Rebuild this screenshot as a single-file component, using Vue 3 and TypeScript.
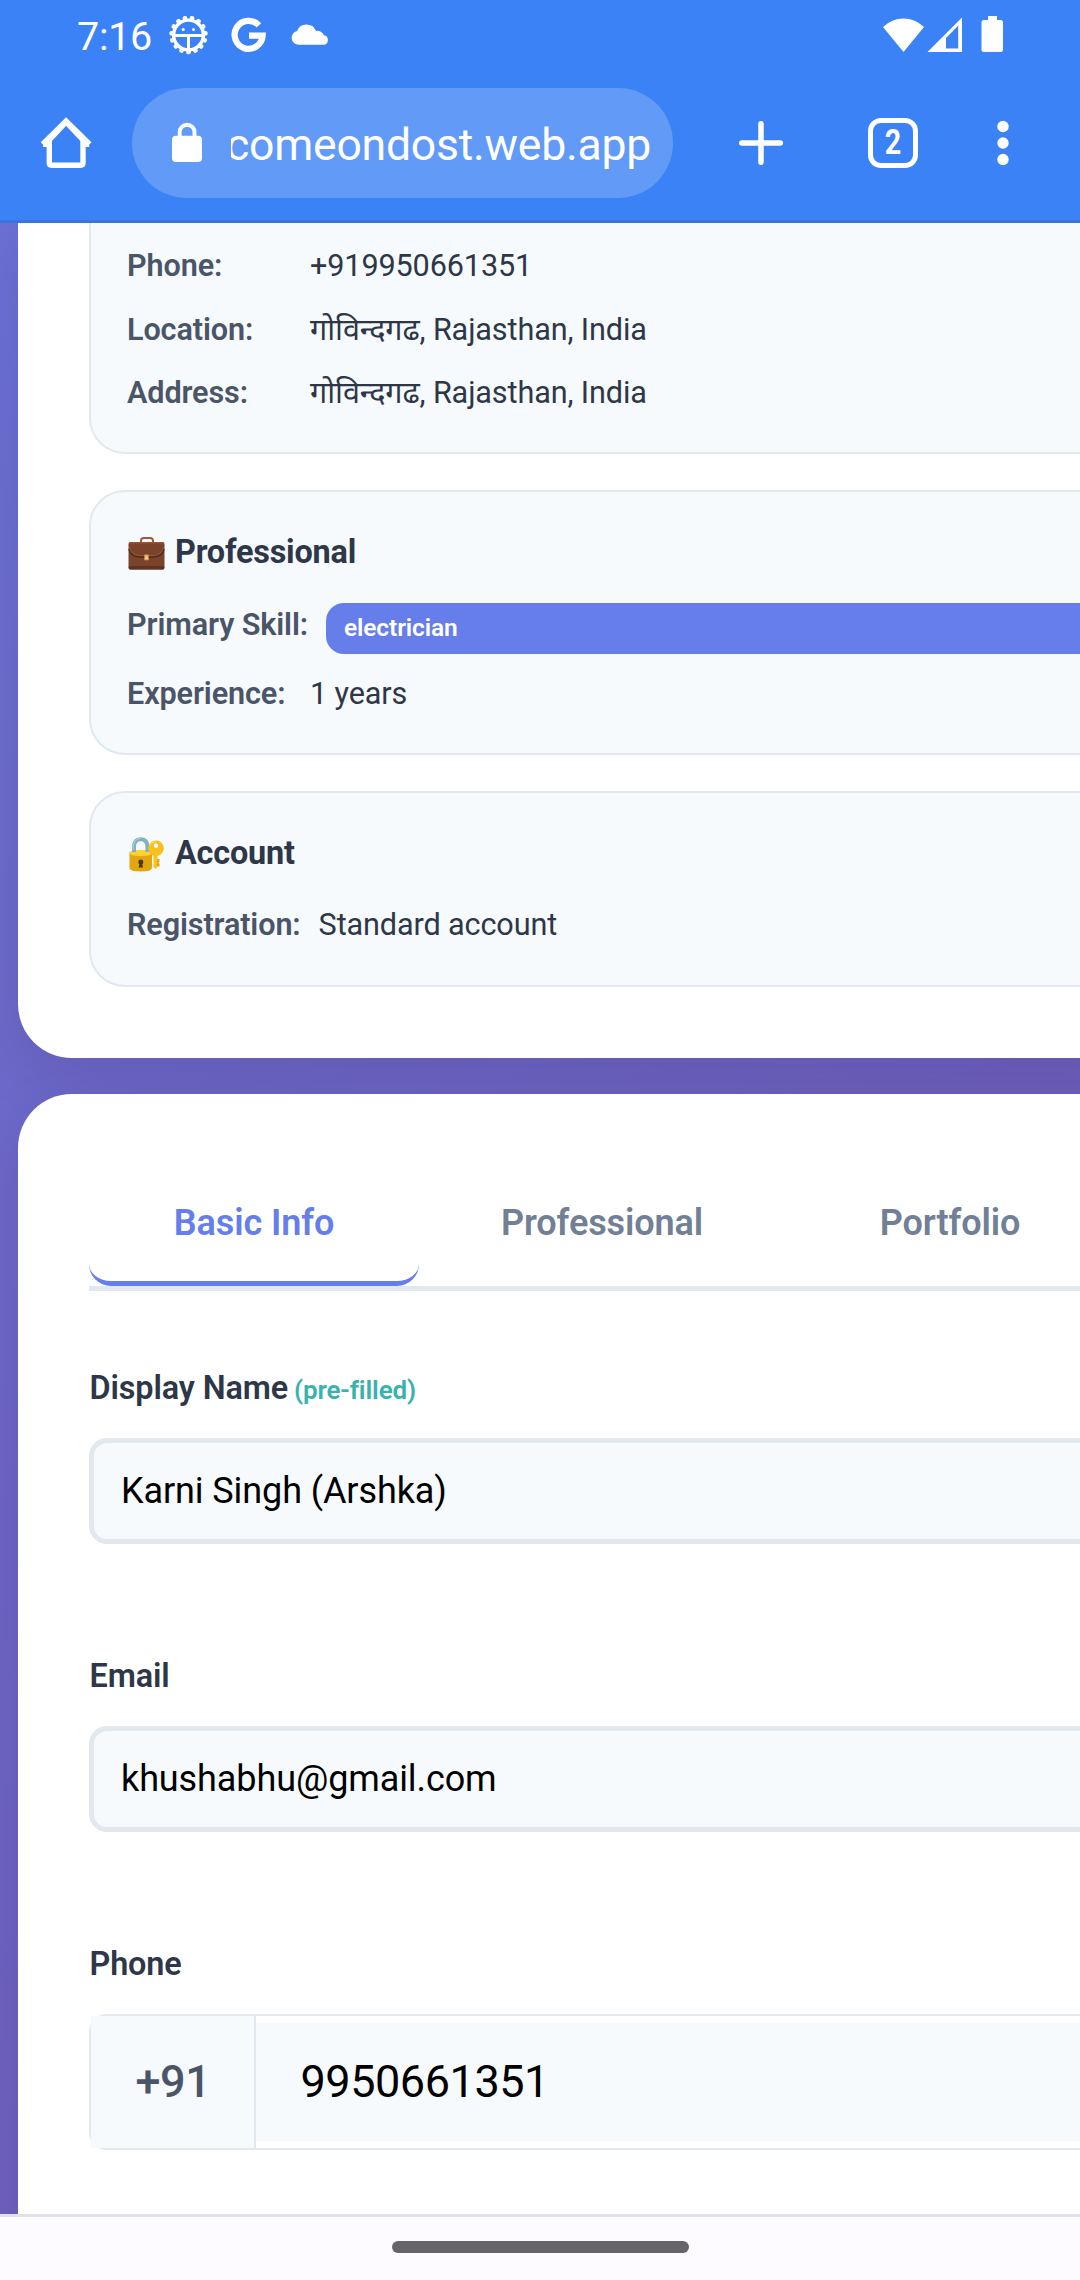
<script setup lang="ts">
interface Row {
  label: string
  value: string
  pill?: boolean
}

const contactRows: Row[] = [
  { label: 'Phone:', value: '+919950661351' },
  { label: 'Location:', value: 'गोविन्दगढ, Rajasthan, India' },
  { label: 'Address:', value: 'गोविन्दगढ, Rajasthan, India' },
]
const professionalRows: Row[] = [
  { label: 'Primary Skill:', value: 'electrician', pill: true },
  { label: 'Experience:', value: '1 years' },
]
const tabs: string[] = ['Basic Info', 'Professional', 'Portfolio']
const activeTab = 'Basic Info'

const teeth: number[] = Array.from({ length: 15 }, (_, i) => 12 + i * 24)
</script>

<template>
  <div class="screen">
    <header class="chrome">
      <div class="status">
        <span class="time">7:16</span>
        <svg class="s-gear" width="40" height="40" viewBox="168 15 40 40">
          <g fill="#fff">
            <rect v-for="a in teeth" :key="a" x="186.2" y="15.8" width="4.6" height="5.4" rx="1.8" :transform="`rotate(${a} 188.5 35)`" />
          </g>
          <circle cx="188.500" cy="35" r="14.900" fill="none" stroke="#fff" stroke-width="3.400" />
          <path d="M174 35.500H203M188.500 36V50" stroke="#fff" stroke-width="3" />
          <circle cx="183.200" cy="29.500" r="1.500" fill="#fff" />
          <circle cx="193.500" cy="29.500" r="1.500" fill="#fff" />
        </svg>
        <svg class="s-g" width="36" height="36" viewBox="231 17 36 36">
          <path d="M258.900 25.300A14 14 0 1 0 262.600 35.600H249" fill="none" stroke="#fff" stroke-width="6.300" />
        </svg>
        <svg class="s-cloud" width="38" height="24" viewBox="291 22 38 24">
          <path d="M298.700 44.800A7 7 0 0 1 297 31A10.200 10.200 0 0 1 316 31A7 7 0 0 1 324 35.200A4.900 4.900 0 0 1 324 44.800Z" fill="#fff" />
        </svg>
        <div class="status-right">
          <svg width="42" height="36" viewBox="883 17 42 36">
            <path d="M883 27A29 29 0 0 1 924 27L903.5 52Z" fill="#fff" />
          </svg>
          <svg class="s-signal" width="35" height="36" viewBox="927 17 35 36">
            <path fill-rule="evenodd" d="M927.5 52L962 17.5V52ZM946 38V48.4H958.2V25.8Z" fill="#fff" />
          </svg>
          <svg class="s-battery" width="22" height="37" viewBox="981 16 22 37">
            <path d="M988 16H997V20H1000.5Q1003 20 1003 22.5V49.5Q1003 52 1000.500 52H984Q981.500 52 981.500 49.500V22.500Q981.500 20 984 20H988Z" fill="#fff" />
          </svg>
        </div>
      </div>
      <div class="toolbar">
        <svg class="t-home" width="52" height="52" viewBox="40 117 52 52">
          <path d="M49.3 142V163Q49.3 165.200 51.500 165.200H80.700Q83 165.200 83 163V142M43 144.300H49.300V140L66.100 122L83 140V144.300H89.200" fill="none" stroke="#fff" stroke-width="5.400" stroke-linejoin="round" />
          <path d="M42.500 144L66.100 120.800L89.700 144" fill="none" stroke="#fff" stroke-width="5" />
        </svg>
        <div class="omnibox">
          <svg class="t-lock" width="32" height="42" viewBox="171 122 32 42">
            <rect x="172" y="135.700" width="30" height="26.300" rx="4" fill="#fff" />
            <path d="M179.700 137V132.200A7.400 7.400 0 0 1 194.500 132.200V137" fill="none" stroke="#fff" stroke-width="3.900" />
          </svg>
          <div class="url"><span>comeondost.web.app</span></div>
        </div>
        <svg class="t-plus" width="46" height="46" viewBox="738 120 46 46">
          <path d="M741.800 143H780.300M761 123.800V162.300" stroke="#fff" stroke-width="5.500" stroke-linecap="round" />
        </svg>
        <div class="tab-count"><span>2</span></div>
        <svg class="t-dots" width="12" height="46" viewBox="997 120 12 46" fill="#fff">
          <circle cx="1003" cy="126.500" r="5.700" />
          <circle cx="1003" cy="143" r="5.700" />
          <circle cx="1003" cy="159.500" r="5.700" />
        </svg>
      </div>
    </header>

    <main class="page">
      <section class="card summary">
        <div class="info contact">
          <div v-for="row in contactRows" :key="row.label" class="row">
            <span class="label">{{ row.label }}</span>
            <span class="value">{{ row.value }}</span>
          </div>
        </div>
        <div class="info professional">
          <h4>
            <svg width="37" height="36" viewBox="0 0 37 36">
              <path d="M13 6V3.500Q13 1 16 1H22Q25 1 25 3.500V6" fill="none" stroke="#a5573c" stroke-width="2" />
              <rect x=".5" y="5" width="36" height="27.500" rx="2" fill="#7b432c" />
              <path d="M1 6.500Q1 5 3 5H34Q36 5 36 6.500Z" fill="#9c5135" />
              <rect x=".8" y="29" width="35.400" height="3.500" rx="1.300" fill="#5d3420" />
              <path d="M1 12Q2 19.500 12 20H25Q35 19.500 36 12" fill="none" stroke="#4f2b1d" stroke-width="1.500" />
              <path d="M1.500 10.500Q3 18 12 18.600H25Q34 18 35.500 10.500" fill="none" stroke="#985a38" stroke-width=".8" />
              <rect x="16.300" y="17.500" width="4.400" height="5.800" rx=".6" fill="#e6a560" />
              <rect x="17.500" y="19.500" width="2" height="2.500" fill="#ffd49b" />
            </svg>
            <span>Professional</span>
          </h4>
          <div v-for="row in professionalRows" :key="row.label" class="row">
            <span class="label">{{ row.label }}</span>
            <span :class="row.pill ? 'pill' : 'value'">{{ row.value }}</span>
          </div>
        </div>
        <div class="info account">
          <h4>
            <svg width="37" height="36" viewBox="0 0 37 36">
              <path d="M6 16V9Q6.500 2.200 12.700 2.200Q19 2.200 19.400 9V16" fill="none" stroke="#84b0c1" stroke-width="4" />
              <path d="M5.200 14V9Q6 2 12 1.500" fill="none" stroke="#b5d5df" stroke-width="1" />
              <path d="M1.500 15Q12.500 11.500 24 15V31Q23.500 34.500 12.700 34.500Q2 34.500 1.500 31Z" fill="#e2a610" />
              <path d="M1.500 15.500Q12.700 10 24 15.500Q24 19 12.700 19Q1.500 19 1.500 15.500Z" fill="#fdd32f" />
              <path d="M6 15V13M19.400 15V13" stroke="#84b0c1" stroke-width="4" />
              <circle cx="12.800" cy="25" r="2.500" fill="#513424" />
              <path d="M12 25H13.700L15 30.500H10.600Z" fill="#513424" />
              <path d="M25.500 16L29.500 16V30L27.500 32L25.500 30Z" fill="#fcc21b" />
              <path d="M29 22H31.500V24.500L30.500 25.500L31.500 27V29.500H29Z" fill="#e8a70f" />
              <path fill-rule="evenodd" d="M28 3.500A7.800 7.800 0 1 1 27.990 3.500ZM28 6.500A2.200 2.200 0 1 0 28.010 6.500Z" fill="#f8bf1e" />
              <path d="M21.500 9Q23 4.800 28 4.500" fill="none" stroke="#ffe36b" stroke-width="1" />
            </svg>
            <span>Account</span>
          </h4>
          <div class="row">
            <span class="label">Registration:</span>
            <span class="value">Standard account</span>
          </div>
        </div>
      </section>

      <section class="card form">
        <nav class="tabs">
          <div v-for="t in tabs" :key="t" class="tab" :class="{ active: t === activeTab }"><span>{{ t }}</span></div>
        </nav>
        <div class="field">
          <label>Display Name <small>(pre-filled)</small></label>
          <div class="input"><span>Karni Singh (Arshka)</span></div>
        </div>
        <div class="field">
          <label>Email</label>
          <div class="input"><span>khushabhu@gmail.com</span></div>
        </div>
        <div class="field">
          <label>Phone</label>
          <div class="phone">
            <div class="prefix">+91</div>
            <div class="number">9950661351</div>
          </div>
        </div>
      </section>
    </main>

    <footer class="gesture"><div class="handle"></div></footer>
  </div>
</template>

<style>
body { margin: 0; }
</style>

<style scoped>
* { box-sizing: border-box; }
.screen {
  width: 1080px; height: 2280px; overflow: hidden;
  display: flex; flex-direction: column;
  font-family: Roboto, "Noto Sans", "Noto Sans Devanagari", "Lohit Devanagari", sans-serif;
  background: #fff;
}
svg { display: block; flex: none; }

.chrome { flex: none; height: 223px; background: #3b82f6; border-bottom: 3px solid #3874df; color: #fff; }
.status { height: 72px; display: flex; align-items: flex-start; padding-left: 77px; }
.time { width: 91px; font-size: 39.500px; line-height: 46px; margin-top: 14px; white-space: nowrap; letter-spacing: -.3px; }
.s-gear { margin-top: 15px; }
.s-g { margin: 17px 0 0 23px; }
.s-cloud { margin: 22px 0 0 24px; }
.status-right { margin: 16px 77px 0 auto; display: flex; align-items: flex-start; }
.status-right svg { margin-top: 1px; }
.status-right .s-signal { margin-left: 2px; }
.status-right .s-battery { margin: 0 0 0 19px; }

.toolbar { height: 148px; padding-top: 16px; display: flex; align-items: flex-start; }
.t-home { margin: 29px 0 0 40px; }
.omnibox {
  margin-left: 40px; width: 541px; height: 110px; border-radius: 55px; background: #629af8;
  display: flex; align-items: flex-start; padding-left: 39px; flex: none;
}
.t-lock { margin-top: 34px; }
.url { margin: 28px 0 0 28px; width: 420px; height: 60px; overflow: hidden; display: flex; justify-content: flex-end; }
.url span { font-size: 44.500px; line-height: 59px; letter-spacing: -.22px; white-space: nowrap; }
.t-plus { margin: 32px 0 0 65px; }
.tab-count {
  margin: 30px 0 0 84px; width: 50px; height: 50px; border: 5.500px solid #fff; border-radius: 13px; flex: none;
  display: flex; align-items: center; justify-content: center;
}
.tab-count span { font-size: 35px; line-height: 40px; font-weight: 700; transform: scaleX(.82); }
.t-dots { margin: 32px 0 0 79px; }

.page {
  flex: none; height: 1991px; overflow: hidden; padding-left: 18px;
  background: linear-gradient(132deg, #6b70d4 0%, #7156b3 100%);
}
.card { width: 1160px; background: #fff; padding-left: 71px; }
.summary { height: 835px; border-radius: 0 0 54px 54px; box-shadow: 0 20px 60px rgba(0, 0, 0, .1); }
.form { height: 1200px; margin-top: 36px; border-radius: 54px 54px 0 0; padding-top: 71px; box-shadow: 0 20px 60px rgba(0, 0, 0, .1); }

.info {
  width: 1080px; background: #f7fafc; border: 2px solid #e2e8f0; border-radius: 36px;
  padding: 36px; margin-bottom: 36px;
}
.contact { height: 231px; border-top: 0; border-radius: 0 0 36px 36px; padding-top: 20px; }
.professional { height: 265px; }
.account { height: 196px; margin-bottom: 0; }
.info h4 {
  margin: 0 0 26px; height: 48px; display: flex; align-items: flex-start; gap: 10px;
  font-size: 32.400px; line-height: 49px; letter-spacing: -.2px; font-weight: 700; color: #2d3748;
}
.account h4 { margin-bottom: 25px; line-height: 48px; }
.info h4 svg { margin: 9px 0 0 1px; }
.account h4 svg { margin-top: 8px; }
.row {
  display: flex; align-items: flex-start; gap: 18px; margin-bottom: 17.500px;
  font-size: 30.600px; line-height: 46px; letter-spacing: -.12px; white-space: nowrap;
}
.label { font-weight: 600; color: #4a5568; min-width: 165px; }
.value { color: #2d3748; height: 46px; }
.pill {
  flex: 1; margin-top: 1px; height: 51px; border-radius: 18px; padding-left: 18px; background: #667eea; color: #fff;
  font-size: 24.500px; line-height: 49px; font-weight: 600;
}
.professional .row { margin-bottom: 17px; }

.tabs { width: 1080px; height: 126px; display: flex; gap: 18px; border-bottom: 5px solid #e2e8f0; }
.tab {
  flex: none; width: 330px; height: 121px; border-bottom: 5px solid transparent; border-radius: 22px;
  text-align: center; font-size: 36px; line-height: 116px; letter-spacing: -.1px; font-weight: 600; color: #718096;
}
.tab.active { color: #667eea; border-bottom-color: #667eea; }

.field { height: 288px; }
.tabs + .field { margin-top: 71px; }
.field label {
  display: block; height: 76px; line-height: 52px; padding-left: .5px; font-size: 32.400px; letter-spacing: -.12px;
  font-weight: 600; color: #2d3748; white-space: nowrap;
}
.field small { font-size: 26px; margin-left: -2px; color: #38b2ac; font-weight: 600; }
.input {
  width: 1080px; height: 106px; border: 5px solid #e2e8f0; border-radius: 18px; background: #f7fafc;
  padding-left: 27px; font-size: 36px; line-height: 96px; letter-spacing: -.1px; color: #000; white-space: nowrap;
}
.phone {
  width: 1080px; height: 136px; border: 2px solid #e2e8f0; border-radius: 18px; display: flex; align-items: center;
  font-size: 45px; color: #000;
}
.prefix {
  width: 165px; height: 132px; background: #f7fafc; border-right: 2px solid #e2e8f0; color: #4a5568; font-weight: 500;
  padding-left: 1px; text-align: center; line-height: 132px; letter-spacing: -.4px; flex: none;
}
.number { flex: 1; height: 118px; line-height: 118px; letter-spacing: -.45px; background: #f7fafc; padding-left: 44.500px; }

.gesture { flex: none; height: 66px; background: #fdfbff; border-top: 3px solid #e1e1ec; padding-top: 24px; }
.handle { width: 297px; height: 12px; border-radius: 6px; background: #666468; margin: 0 auto; }
</style>
